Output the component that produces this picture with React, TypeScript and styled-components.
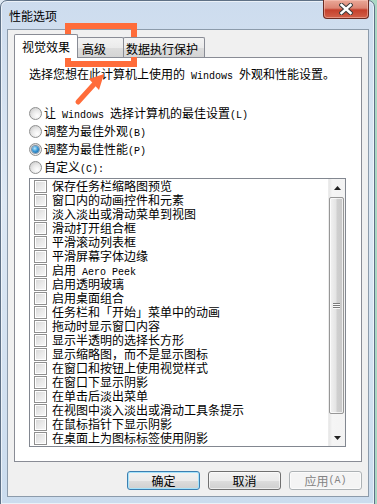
import React from 'react';
import styled, { createGlobalStyle } from 'styled-components';

const GlobalStyle = createGlobalStyle`
  html, body {
    margin: 0;
    padding: 0;
    background: #cfe0f0;
  }
  body {
    font-family: "Noto Sans CJK SC", "Noto Sans", sans-serif;
    font-size: 12px;
    color: #000;
  }
`;

const Page = styled.div`
  position: relative;
  width: 377px;
  height: 504px;
  overflow: hidden;
  background: linear-gradient(90deg, #dfe9f3 0%, #b9d3ec 60%, #a9d8c4 100%);
`;

const Window = styled.div`
  box-sizing: border-box;
  width: 375px;
  height: 505px;
  display: flex;
  flex-direction: column;
  border: 1px solid #5f7186;
  border-radius: 7px 7px 0 0;
  padding: 0 5px 7px 6px;
  background: linear-gradient(180deg, #cddcee 0%, #dde8f4 40%, #cbdcee 100%);
  box-shadow: inset 0 0 0 1px rgba(255, 255, 255, 0.6);
`;

const TitleBar = styled.div`
  height: 28px;
  display: flex;
  align-items: center;
`;

const Title = styled.span`
  margin-left: 2px;
  margin-top: 2px;
  line-height: 14px;
`;

const CloseButton = styled.div`
  margin-left: auto;
  align-self: flex-start;
  margin-top: -1px;
  box-sizing: border-box;
  width: 46px;
  height: 19px;
  display: flex;
  align-items: center;
  justify-content: center;
  border: 1px solid #6a2b22;
  border-top: none;
  border-radius: 0 0 4px 4px;
  background: linear-gradient(180deg, #eaa898 0%, #dc8573 45%, #c5402c 55%, #d2614a 100%);
  box-shadow: inset 0 0 0 1px rgba(255, 210, 200, 0.45);
`;

const Client = styled.div`
  flex: 1;
  display: flex;
  flex-direction: column;
  border: 1px solid #8c9bab;
  background: #f0f0f0;
  padding: 4px 6px 0 6px;
`;

const TabStrip = styled.div`
  height: 23px;
  display: flex;
  align-items: flex-end;
`;

const Tab = styled.div<{ $active?: boolean; $w: number; $pl: number }>`
  box-sizing: border-box;
  width: ${p => p.$w}px;
  height: ${p => (p.$active ? 24 : 20)}px;
  margin-bottom: ${p => (p.$active ? -1 : 0)}px;
  margin-left: ${p => (p.$active ? 0 : -1)}px;
  padding-left: ${p => p.$pl}px;
  padding-top: ${p => (p.$active ? 0 : 2)}px;
  display: flex;
  align-items: center;
  line-height: 14px;
  border: 1px solid #898c95;
  border-bottom: none;
  border-radius: 2px 2px 0 0;
  background: ${p =>
    p.$active ? '#ffffff' : 'linear-gradient(180deg, #f3f3f3 0%, #ebebeb 50%, #dddddd 51%, #d4d4d4 100%)'};
  position: relative;
  z-index: ${p => (p.$active ? 2 : 1)};
`;

const Panel = styled.div`
  box-sizing: border-box;
  height: 405px;
  border: 1px solid #898c95;
  background: #ffffff;
  padding: 8px 15px 0 14px;
  display: flex;
  flex-direction: column;
`;

const Intro = styled.div`
  height: 16px;
  line-height: 16px;
  white-space: nowrap;
`;

const RadioGroup = styled.div`
  margin-top: 22px;
  display: flex;
  flex-direction: column;
`;

const RadioRow = styled.div`
  height: 18px;
  display: flex;
  align-items: center;
  gap: 2px;
  white-space: nowrap;
`;

const Label = styled.span`
  display: block;
  height: 14px;
  line-height: 14px;
  white-space: nowrap;
`;

const RadioCircle = styled.span<{ $checked?: boolean }>`
  box-sizing: border-box;
  width: 13px;
  height: 13px;
  border-radius: 50%;
  border: 1px solid #8f9090;
  background: radial-gradient(circle at 65% 70%, #ffffff 0%, #eaeaea 45%, #c2c2c2 100%);
  display: flex;
  align-items: center;
  justify-content: center;
  &::after {
    content: '';
    display: ${p => (p.$checked ? 'block' : 'none')};
    width: 7px;
    height: 7px;
    border-radius: 50%;
    background: radial-gradient(circle at 40% 35%, #bfe8fb 0%, #3b9bd9 45%, #0b4f8a 100%);
    box-shadow: 0 0 0 1px rgba(30, 70, 110, 0.5);
  }
`;

const ListBox = styled.div`
  box-sizing: border-box;
  margin-top: 2px;
  height: 269px;
  border: 1px solid #828790;
  background: #ffffff;
  display: flex;
`;

const Items = styled.div`
  flex: 1;
  padding-left: 4px;
  display: flex;
  flex-direction: column;
`;

const ItemRow = styled.div`
  height: 14px;
  flex: 0 0 14px;
  display: flex;
  align-items: center;
  gap: 5px;
`;

const CheckBox = styled.span`
  box-sizing: border-box;
  width: 13px;
  height: 13px;
  flex: 0 0 13px;
  border: 1px solid #8f8f8f;
  background: linear-gradient(135deg, #d6d6d6 0%, #e9e9e9 50%, #f8f8f8 100%);
  box-shadow: inset 0 0 0 1px #ffffff;
`;

const ScrollBar = styled.div`
  width: 16px;
  display: flex;
  flex-direction: column;
  background: linear-gradient(90deg, #e6e6e6 0%, #f5f5f5 20%, #f3f3f3 100%);
  border-left: 1px solid #ececec;
`;

const ArrowButton = styled.div`
  height: 17px;
  display: flex;
  align-items: center;
  justify-content: center;
`;

const Track = styled.div`
  flex: 1;
  padding: 1px 0 15px 0;
  display: flex;
`;

const Thumb = styled.div`
  box-sizing: border-box;
  width: 15px;
  height: 217px;
  border: 1px solid #979797;
  border-radius: 2px;
  background: linear-gradient(90deg, #f2f2f2 0%, #e4e4e4 45%, #cfcfcf 55%, #c9c9c9 100%);
  box-shadow: inset 0 0 0 1px rgba(255, 255, 255, 0.7);
  display: flex;
  align-items: center;
  justify-content: center;
`;

const Grip = styled.div`
  display: flex;
  flex-direction: column;
  gap: 1px;
  span {
    display: block;
    width: 7px;
    height: 1px;
    background: #7b7b7b;
    box-shadow: 0 1px 0 #fafafa;
  }
`;

const ButtonRow = styled.div`
  margin-top: 9px;
  display: flex;
  justify-content: flex-end;
  gap: 8px;
`;

const Button = styled.div<{ $default?: boolean; $disabled?: boolean }>`
  box-sizing: border-box;
  width: 73px;
  height: 19px;
  display: flex;
  align-items: center;
  justify-content: center;
  border-radius: 3px;
  line-height: 14px;
  border: 1px solid ${p => (p.$default ? '#3c7fb1' : p.$disabled ? '#adb2b5' : '#707070')};
  color: ${p => (p.$disabled ? '#838383' : '#000')};
  background: ${p =>
    p.$disabled ? '#f4f4f4' : 'linear-gradient(180deg, #f2f2f2 0%, #ebebeb 50%, #dddddd 51%, #cfcfcf 100%)'};
  box-shadow: ${p => (p.$default ? 'inset 0 0 0 1px #a6e3fb' : 'inset 0 0 0 1px rgba(255,255,255,0.6)')};
`;

const Latin = styled.span`
  font-family: "Liberation Mono", "DejaVu Sans Mono", monospace;
  font-size: 10px;
  line-height: 1;
`;

const Annotation = styled.svg`
  position: absolute;
  left: 0;
  top: 0;
  pointer-events: none;
`;

const mix = (s: string) =>
  s.split(/([\x20-\x7e]+)/).map((part, i) =>
    /^[\x20-\x7e]+$/.test(part) ? <Latin key={i}>{part}</Latin> : part
  );

const radios = [
  { label: '让 Windows 选择计算机的最佳设置(L)' },
  { label: '调整为最佳外观(B)' },
  { label: '调整为最佳性能(P)', checked: true },
  { label: '自定义(C):' },
];

const options = [
  '保存任务栏缩略图预览',
  '窗口内的动画控件和元素',
  '淡入淡出或滑动菜单到视图',
  '滑动打开组合框',
  '平滑滚动列表框',
  '平滑屏幕字体边缘',
  '启用 Aero Peek',
  '启用透明玻璃',
  '启用桌面组合',
  '任务栏和「开始」菜单中的动画',
  '拖动时显示窗口内容',
  '显示半透明的选择长方形',
  '显示缩略图，而不是显示图标',
  '在窗口和按钮上使用视觉样式',
  '在窗口下显示阴影',
  '在单击后淡出菜单',
  '在视图中淡入淡出或滑动工具条提示',
  '在鼠标指针下显示阴影',
  '在桌面上为图标标签使用阴影',
];

export default function App() {
  return (
    <Page>
      <GlobalStyle />
      <Window>
        <TitleBar>
          <Title>性能选项</Title>
          <CloseButton>
            <svg width="14" height="12" viewBox="0 0 14 12">
              <path d="M2.5 2 L11.5 10 M11.5 2 L2.5 10" stroke="#3b3b3b" strokeWidth="4.5" strokeLinecap="square" />
              <path d="M2.5 2 L11.5 10 M11.5 2 L2.5 10" stroke="#ffffff" strokeWidth="2.5" strokeLinecap="square" />
            </svg>
          </CloseButton>
        </TitleBar>
        <Client>
          <TabStrip>
            <Tab $active $w={64} $pl={7}>视觉效果</Tab>
            <Tab $w={47} $pl={4}>高级</Tab>
            <Tab $w={82} $pl={2}>数据执行保护</Tab>
          </TabStrip>
          <Panel>
            <Intro>{mix('选择您想在此计算机上使用的 Windows 外观和性能设置。')}</Intro>
            <RadioGroup>
              {radios.map(r => (
                <RadioRow key={r.label}>
                  <RadioCircle $checked={r.checked} />
                  <Label>{mix(r.label)}</Label>
                </RadioRow>
              ))}
            </RadioGroup>
            <ListBox>
              <Items>
                {options.map(o => (
                  <ItemRow key={o}>
                    <CheckBox />
                    <Label>{mix(o)}</Label>
                  </ItemRow>
                ))}
              </Items>
              <ScrollBar>
                <ArrowButton>
                  <svg width="7" height="4" viewBox="0 0 7 4">
                    <polygon points="3.5,0 7,4 0,4" fill="#222" />
                  </svg>
                </ArrowButton>
                <Track>
                  <Thumb>
                    <Grip>
                      <span />
                      <span />
                      <span />
                    </Grip>
                  </Thumb>
                </Track>
                <ArrowButton>
                  <svg width="7" height="4" viewBox="0 0 7 4">
                    <polygon points="0,0 7,0 3.5,4" fill="#222" />
                  </svg>
                </ArrowButton>
              </ScrollBar>
            </ListBox>
          </Panel>
          <ButtonRow>
            <Button $default>确定</Button>
            <Button>取消</Button>
            <Button $disabled>{mix('应用(A)')}</Button>
          </ButtonRow>
        </Client>
      </Window>
      <Annotation width="377" height="504" viewBox="0 0 377 504">
        <rect x="68" y="26" width="66" height="38" fill="none" stroke="#ff6c3a" strokeWidth="6" />
        <path d="M78 102 L97 81" stroke="#ff6c3a" strokeWidth="5" strokeLinecap="round" />
        <polygon points="104,74 89,79 99,90" fill="#ff6c3a" />
      </Annotation>
    </Page>
  );
}
